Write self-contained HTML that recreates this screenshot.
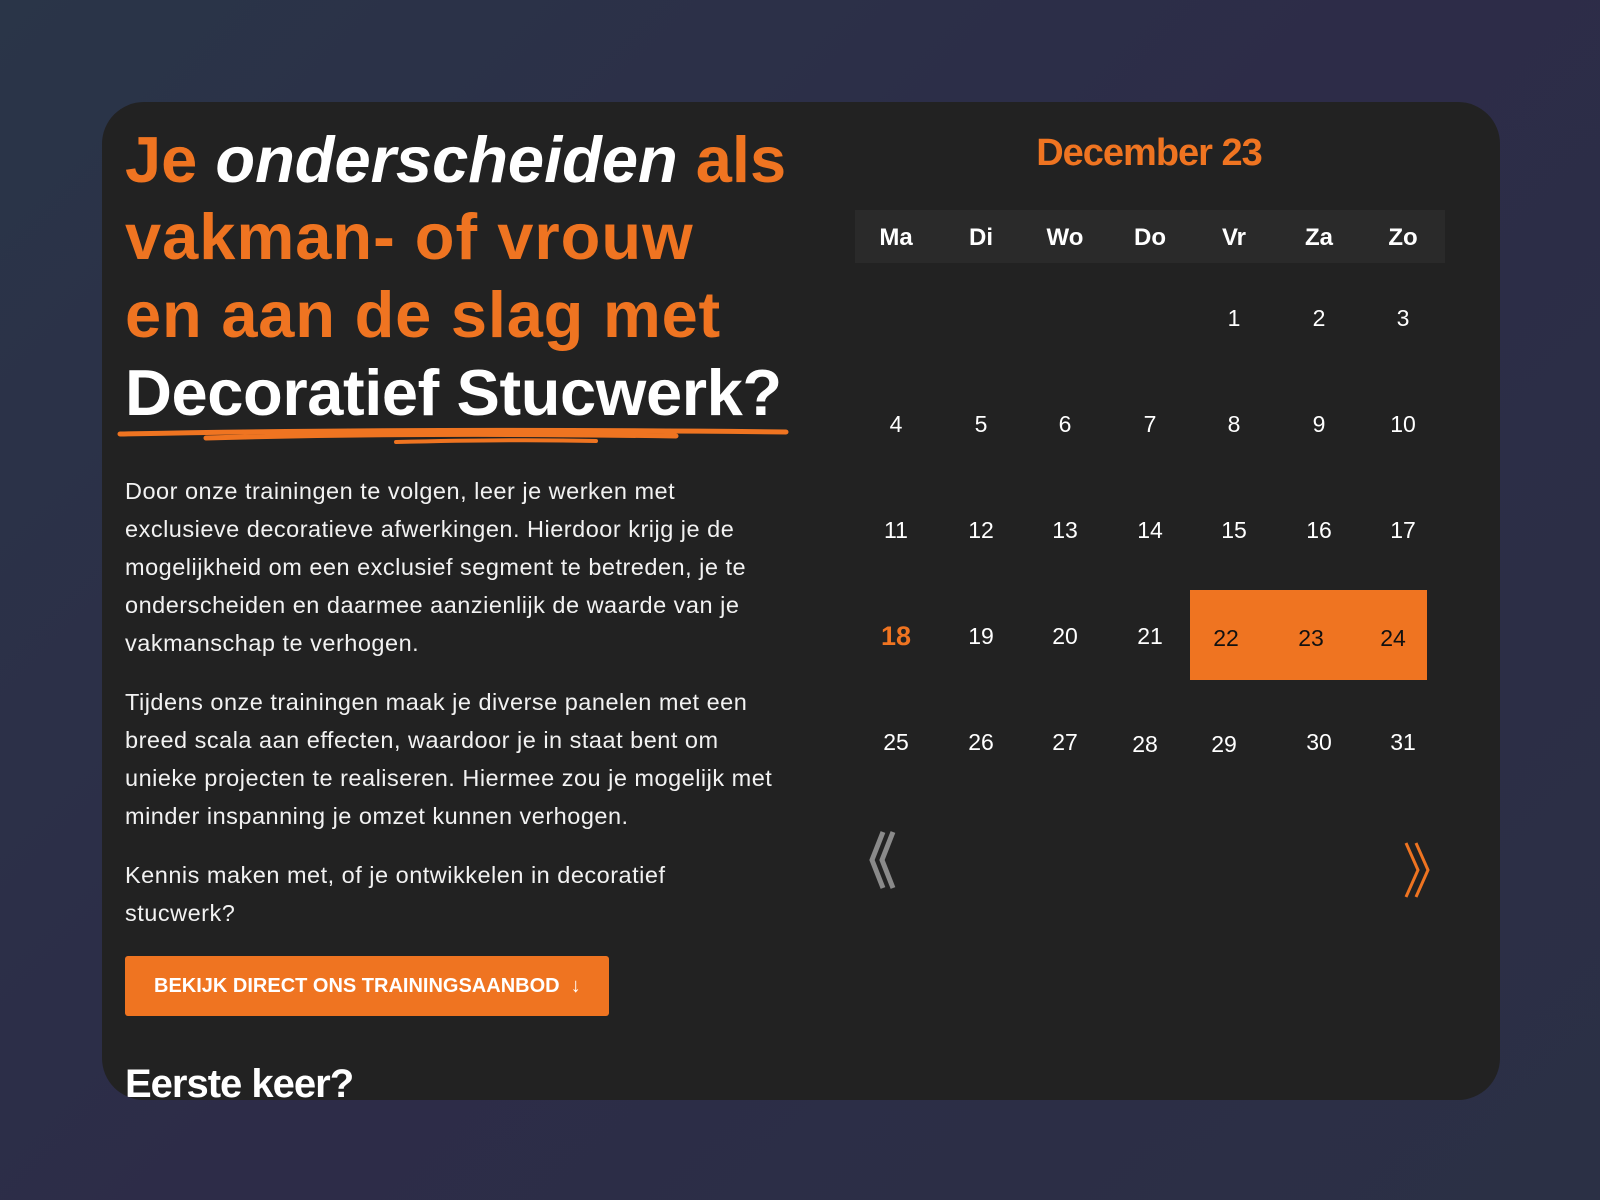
<!DOCTYPE html>
<html><head><meta charset="utf-8"><style>
*{margin:0;padding:0;box-sizing:border-box}
body{width:1600px;height:1200px;overflow:hidden;background:linear-gradient(135deg,#2a3548 0%,#2d2c48 50%,#2b3045 100%);font-family:"Liberation Sans",sans-serif;position:relative}
.card{position:absolute;left:102px;top:102px;width:1398px;height:998px;background:#222;border-radius:42px;overflow:hidden}
.h{position:absolute;left:23px;font-weight:bold;font-size:65px;letter-spacing:0px;color:#ef7421;white-space:nowrap;line-height:1}
.w{color:#fff}
p{position:absolute;left:23px;color:#f2f2f2;font-size:23.5px;line-height:38px;letter-spacing:0.5px;white-space:nowrap}
.btn{position:absolute;left:23px;top:854px;width:484px;height:60px;background:#ef7421;border-radius:3px;color:#fff;font-weight:bold;font-size:20px;letter-spacing:0px;line-height:60px;padding-left:29px}
.cal{position:absolute;left:753px;top:108px;width:590px;height:53px;background:#2a2a2a}
.d{position:absolute;width:84px;text-align:center;color:#fff;font-size:23px;transform:translateX(-42px)}
.hd{font-weight:bold;font-size:24px}
</style></head><body>
<div class="card">
<div class="h" style="top:25px">Je <i class="w">onderscheiden</i> als</div>
<div class="h" style="top:102px;letter-spacing:1px">vakman- of vrouw</div>
<div class="h" style="top:180px;letter-spacing:0.8px">en aan de slag met</div>
<div class="h w" style="top:258px;letter-spacing:-0.4px">Decoratief Stucwerk?</div>
<svg style="position:absolute;left:14px;top:322px" width="680" height="24"><path d="M4 10 Q300 4 670 8" stroke="#ef7421" stroke-width="5" fill="none" stroke-linecap="round"/><path d="M90 14 Q300 8 560 12" stroke="#ef7421" stroke-width="5" fill="none" stroke-linecap="round"/><path d="M280 18 Q400 15 480 17" stroke="#ef7421" stroke-width="4" fill="none" stroke-linecap="round"/></svg>
<p style="top:370px">Door onze trainingen te volgen, leer je werken met<br>exclusieve decoratieve afwerkingen. Hierdoor krijg je de<br>mogelijkheid om een exclusief segment te betreden, je te<br>onderscheiden en daarmee aanzienlijk de waarde van je<br>vakmanschap te verhogen.</p>
<p style="top:581px">Tijdens onze trainingen maak je diverse panelen met een<br>breed scala aan effecten, waardoor je in staat bent om<br>unieke projecten te realiseren. Hiermee zou je mogelijk met<br>minder inspanning je omzet kunnen verhogen.</p>
<p style="top:754px">Kennis maken met, of je ontwikkelen in decoratief<br>stucwerk?</p>
<div class="btn">BEKIJK DIRECT ONS TRAININGSAANBOD &nbsp;↓</div>
<div class="h w" style="top:962px;font-size:40px;letter-spacing:-1px">Eerste keer?</div>
<div style="position:absolute;left:1047px;top:30px;transform:translateX(-50%);color:#ef7421;font-weight:bold;font-size:38px;letter-spacing:-1px">December 23</div>
<div class="cal"></div>
<div style="position:absolute;left:1088px;top:488px;width:237px;height:90px;background:#ef7421"></div>
<div id="g"></div>
<svg style="position:absolute;left:765px;top:726px" width="40" height="64"><path d="M16 4 L5 32 L16 60 M26 4 L15 32 L26 60" stroke="#8a8a8a" stroke-width="5" fill="none"/></svg>
<svg style="position:absolute;left:1300px;top:737px" width="40" height="64"><path d="M4 4 L16 31 L4 58 M14 4 L26 31 L14 58" stroke="#ef7421" stroke-width="3" fill="none"/></svg>
</div>
<script>
var xs=[794,879,963,1048,1132,1217,1301],hd=["Ma","Di","Wo","Do","Vr","Za","Zo"],ys=[203,309,415,521,627],h="";
hd.forEach((t,i)=>h+=`<div class="d hd" style="left:${xs[i]}px;top:122px">${t}</div>`);
for(var n=1;n<=31;n++){var idx=n+3,r=Math.floor(idx/7),c=idx%7;var st="";
if(n==18)st="color:#ef7421;font-weight:bold;font-size:27px;";
if(n>=22&&n<=24){st="color:#111;";}
var x=xs[c];
if(n>=22&&n<=24)x=[1124,1209,1291][n-22];
if(n==28)x=1043;if(n==29)x=1122;
h+=`<div class="d" style="left:${x}px;top:${ys[r]+(n==18?-2:(n>=22&&n<=29&&n!=25&&n!=26&&n!=27?2:0))}px;${st}">${n}</div>`;}
document.getElementById("g").outerHTML=h;
</script>
</body></html>
